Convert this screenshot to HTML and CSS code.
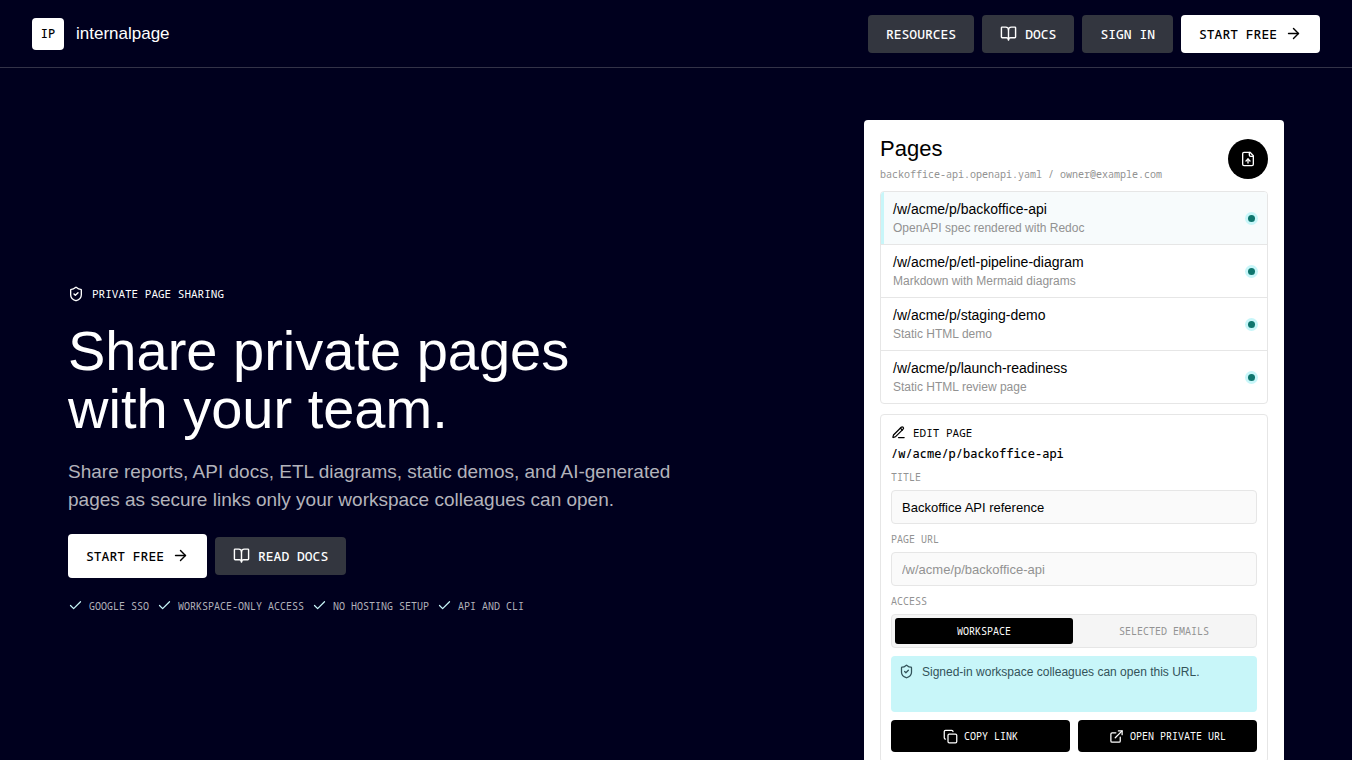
FILE: index.html
```html
<!DOCTYPE html>
<html lang="en">
<head>
    <meta charset="UTF-8">
    <meta name="viewport" content="width=device-width, initial-scale=1.0">
    <title>internalpage - Share private pages with your team</title>
    <link rel="stylesheet" href="styles.css">
</head>
<body>

    <!-- Shared icons -->
    <svg class="sprite" aria-hidden="true">
        <symbol id="icon-book" viewBox="0 0 24 24">
            <path d="M12 7v14"/>
            <path d="M3 18a1 1 0 0 1-1-1V4a1 1 0 0 1 1-1h5a4 4 0 0 1 4 4 4 4 0 0 1 4-4h5a1 1 0 0 1 1 1v13a1 1 0 0 1-1 1h-6a3 3 0 0 0-3 3 3 3 0 0 0-3-3z"/>
        </symbol>
        <symbol id="icon-arrow" viewBox="0 0 24 24">
            <path d="M5 12h14"/>
            <path d="m12 5 7 7-7 7"/>
        </symbol>
        <symbol id="icon-shield" viewBox="0 0 24 24">
            <path d="M20 13c0 5-3.5 7.5-7.66 8.95a1 1 0 0 1-.67-.01C7.5 20.5 4 18 4 13V6a1 1 0 0 1 1-1c2 0 4.5-1.2 6.24-2.72a1.17 1.17 0 0 1 1.52 0C14.51 3.81 17 5 19 5a1 1 0 0 1 1 1z"/>
            <path d="m9 12 2 2 4-4"/>
        </symbol>
        <symbol id="icon-check" viewBox="0 0 24 24">
            <path d="M20 6 9 17l-5-5"/>
        </symbol>
    </svg>

    <!-- Top bar -->
    <header class="site-header">
        <a href="/" class="brand">
            <span class="brand-mark">IP</span>
            <span class="brand-name">internalpage</span>
        </a>
        <nav class="site-nav">
            <a href="/resources" class="button">Resources</a>
            <a href="/docs" class="button"><svg class="icon"><use href="#icon-book"/></svg>Docs</a>
            <a href="/login" class="button">Sign in</a>
            <a href="/signup" class="button button-primary">Start free<svg class="icon"><use href="#icon-arrow"/></svg></a>
        </nav>
    </header>

    <main class="hero">
        <!-- Intro -->
        <section class="hero-copy">
            <p class="eyebrow"><svg class="icon"><use href="#icon-shield"/></svg>Private page sharing</p>
            <h1>Share private pages with your team.</h1>
            <p class="lead">Share reports, API docs, ETL diagrams, static demos, and AI-generated pages as secure links only your workspace colleagues can open.</p>
            <div class="hero-actions">
                <a href="/signup" class="button button-primary button-large">Start free<svg class="icon"><use href="#icon-arrow"/></svg></a>
                <a href="/docs" class="button"><svg class="icon"><use href="#icon-book"/></svg>Read docs</a>
            </div>
            <ul class="features">
                <li><svg class="icon"><use href="#icon-check"/></svg>Google SSO</li>
                <li><svg class="icon"><use href="#icon-check"/></svg>Workspace-only access</li>
                <li><svg class="icon"><use href="#icon-check"/></svg>No hosting setup</li>
                <li><svg class="icon"><use href="#icon-check"/></svg>API and CLI</li>
            </ul>
        </section>

        <!-- Product preview -->
        <section class="panel">
            <div class="panel-header">
                <div>
                    <h2>Pages</h2>
                    <p class="panel-meta">backoffice-api.openapi.yaml / owner@example.com</p>
                </div>
                <button type="button" class="upload" aria-label="Upload page">
                    <svg class="icon" viewBox="0 0 24 24">
                        <path d="M15 2H6a2 2 0 0 0-2 2v16a2 2 0 0 0 2 2h12a2 2 0 0 0 2-2V7z"/>
                        <path d="M14 2v4a2 2 0 0 0 2 2h4"/>
                        <path d="M12 12v6"/>
                        <path d="m15 15-3-3-3 3"/>
                    </svg>
                </button>
            </div>

            <ul class="page-list">
                <li class="page-row selected">
                    <div>
                        <a href="/w/acme/p/backoffice-api">/w/acme/p/backoffice-api</a>
                        <p>OpenAPI spec rendered with Redoc</p>
                    </div>
                    <span class="status"></span>
                </li>
                <li class="page-row">
                    <div>
                        <a href="/w/acme/p/etl-pipeline-diagram">/w/acme/p/etl-pipeline-diagram</a>
                        <p>Markdown with Mermaid diagrams</p>
                    </div>
                    <span class="status"></span>
                </li>
                <li class="page-row">
                    <div>
                        <a href="/w/acme/p/staging-demo">/w/acme/p/staging-demo</a>
                        <p>Static HTML demo</p>
                    </div>
                    <span class="status"></span>
                </li>
                <li class="page-row">
                    <div>
                        <a href="/w/acme/p/launch-readiness">/w/acme/p/launch-readiness</a>
                        <p>Static HTML review page</p>
                    </div>
                    <span class="status"></span>
                </li>
            </ul>

            <form class="editor">
                <div class="editor-heading">
                    <h3>
                        <svg class="icon" viewBox="0 0 24 24">
                            <path d="M12 20h9"/>
                            <path d="M16.38 3.62a1 1 0 0 1 3 3L7.37 18.64a2 2 0 0 1-.86.5l-2.87.84a.5.5 0 0 1-.62-.62l.84-2.87a2 2 0 0 1 .5-.86z"/>
                            <path d="m15 5 3 3"/>
                        </svg>
                        Edit page
                    </h3>
                    <p class="editor-path">/w/acme/p/backoffice-api</p>
                </div>

                <div class="field">
                    <label for="title">Title</label>
                    <input type="text" id="title" name="title" value="Backoffice API reference">
                </div>
                <div class="field">
                    <label for="url">Page URL</label>
                    <input type="text" id="url" name="url" value="/w/acme/p/backoffice-api" readonly>
                </div>
                <div class="field" role="group" aria-labelledby="access">
                    <span class="field-label" id="access">Access</span>
                    <div class="segmented">
                        <button type="button" class="active" aria-pressed="true">Workspace</button>
                        <button type="button" aria-pressed="false">Selected emails</button>
                    </div>
                </div>

                <p class="notice"><svg class="icon"><use href="#icon-shield"/></svg>Signed-in workspace colleagues can open this URL.</p>

                <div class="editor-actions">
                    <button type="button">
                        <svg class="icon" viewBox="0 0 24 24">
                            <rect x="8" y="8" width="14" height="14" rx="2"/>
                            <path d="M4 16c-1.1 0-2-.9-2-2V4c0-1.1.9-2 2-2h10c1.1 0 2 .9 2 2"/>
                        </svg>
                        Copy link
                    </button>
                    <button type="button">
                        <svg class="icon" viewBox="0 0 24 24">
                            <path d="M15 3h6v6"/>
                            <path d="M10 14 21 3"/>
                            <path d="M18 13v6a2 2 0 0 1-2 2H5a2 2 0 0 1-2-2V8a2 2 0 0 1 2-2h6"/>
                        </svg>
                        Open private URL
                    </button>
                </div>
            </form>
        </section>
    </main>

</body>
</html>
```
FILE: styles.css
```css
:root {
    --navy: #00001e;
    --slate: #33363f;
    --line: #e6e6e6;
    --muted: #929292;
    --aqua: #c8f6f9;
    --mono: "Noto Sans Mono", "DejaVu Sans Mono", monospace;
}

* {
    margin: 0;
    padding: 0;
    box-sizing: border-box;
}

body {
    background-color: var(--navy);
    color: #fff;
    font-family: "Liberation Sans", Arial, sans-serif;
}

a {
    color: inherit;
    text-decoration: none;
}

ul {
    list-style: none;
}

button,
input {
    font: inherit;
    color: inherit;
}

button {
    border: none;
    cursor: pointer;
}

.sprite {
    display: none;
}

.icon {
    width: 15px;
    height: 15px;
    flex: none;
    fill: none;
    stroke: currentColor;
    stroke-width: 2;
    stroke-linecap: round;
    stroke-linejoin: round;
}

/* Top bar */
.site-header {
    display: flex;
    align-items: center;
    justify-content: space-between;
    min-height: 68px;
    padding: 0 32px;
    border-bottom: 1px solid #333348;
}

.brand {
    display: flex;
    align-items: center;
    gap: 12px;
    font-size: 17px;
}

.brand-mark {
    display: grid;
    place-items: center;
    width: 32px;
    height: 32px;
    border-radius: 4px;
    background-color: #fff;
    color: #000;
    font-family: var(--mono);
    font-size: 12px;
    font-weight: 500;
}

.site-nav,
.hero-actions {
    display: flex;
    align-items: center;
    gap: 8px;
}

.button {
    display: inline-flex;
    align-items: center;
    gap: 8px;
    min-height: 38px;
    padding: 0 18px;
    border-radius: 4px;
    background-color: var(--slate);
    font-family: var(--mono);
    font-size: 13px;
    font-weight: 500;
    text-transform: uppercase;
}

.button .icon {
    width: 17px;
    height: 17px;
}

.button-primary {
    background-color: #fff;
    color: #000;
}

.button-large {
    min-height: 44px;
}

/* Hero */
.hero {
    display: grid;
    grid-template-columns: minmax(0, 1fr) 420px;
    align-items: center;
    gap: 48px;
    max-width: 1280px;
    margin: 0 auto;
    padding: 52px 32px;
}

.hero-copy {
    display: flex;
    flex-direction: column;
    gap: 20px;
}

.eyebrow {
    display: flex;
    align-items: center;
    gap: 8px;
    font-family: var(--mono);
    font-size: 11px;
    line-height: 16px;
    text-transform: uppercase;
}

.eyebrow .icon {
    width: 16px;
    height: 16px;
}

h1 {
    max-width: 580px;
    font-size: 56px;
    font-weight: 400;
    line-height: 58px;
}

.lead {
    max-width: 620px;
    color: #b3b3bb;
    font-size: 19px;
    line-height: 28px;
}

.features {
    display: flex;
    flex-wrap: wrap;
    gap: 8px;
    color: #b3b3bb;
    font-family: var(--mono);
    font-size: 10px;
    line-height: 16px;
    text-transform: uppercase;
}

.features li {
    display: flex;
    align-items: center;
    gap: 6px;
}

.features .icon {
    color: var(--aqua);
}

/* Pages panel */
.panel {
    display: flex;
    flex-direction: column;
    gap: 10px;
    padding: 16px;
    border-radius: 4px;
    background-color: #fff;
    color: #000;
}

.panel-header {
    display: flex;
    align-items: center;
    justify-content: space-between;
}

h2 {
    margin-bottom: 6px;
    font-size: 22px;
    font-weight: 400;
    line-height: 25px;
}

.panel-meta {
    color: var(--muted);
    font-family: var(--mono);
    font-size: 10px;
    line-height: 14px;
}

.upload {
    display: grid;
    place-items: center;
    width: 40px;
    height: 40px;
    border-radius: 50%;
    background-color: #000;
    color: #fff;
}

.upload .icon {
    width: 16px;
    height: 16px;
}

.page-list {
    overflow: hidden;
    border: 1px solid var(--line);
    border-radius: 4px;
}

.page-row {
    display: flex;
    align-items: center;
    justify-content: space-between;
    padding: 8px 12px;
    font-size: 14px;
    line-height: 18px;
}

.page-row + .page-row {
    border-top: 1px solid var(--line);
}

.page-row.selected {
    background-color: #f7fbfc;
    box-shadow: inset 3px 0 0 var(--aqua);
}

.page-row p {
    margin-top: 2px;
    color: var(--muted);
    font-size: 12px;
    line-height: 16px;
}

.status {
    width: 7px;
    height: 7px;
    border-radius: 50%;
    background-color: #0f766e;
    box-shadow: 0 0 0 3px var(--aqua);
}

/* Editor */
.editor {
    display: flex;
    flex-direction: column;
    gap: 8px;
    padding: 10px;
    border: 1px solid var(--line);
    border-radius: 4px;
}

.editor-heading {
    display: flex;
    flex-direction: column;
    gap: 6px;
    font-family: var(--mono);
}

h3 {
    display: flex;
    align-items: center;
    gap: 7px;
    font-size: 11px;
    font-weight: 400;
    line-height: 15px;
    text-transform: uppercase;
}

.editor-path {
    font-size: 12px;
    font-weight: 500;
    line-height: 16px;
}

.field {
    display: flex;
    flex-direction: column;
    gap: 5px;
}

.field label,
.field-label {
    color: var(--muted);
    font-family: var(--mono);
    font-size: 10px;
    line-height: 15px;
    text-transform: uppercase;
}

.field input {
    width: 100%;
    height: 34px;
    padding: 0 10px;
    border: 1px solid var(--line);
    border-radius: 4px;
    background-color: #fafafa;
    font-size: 13px;
}

.field input:read-only {
    color: var(--muted);
}

.segmented {
    display: grid;
    grid-template-columns: 1fr 1fr;
    gap: 2px;
    padding: 3px;
    border: 1px solid var(--line);
    border-radius: 4px;
    background-color: #f5f5f5;
}

.segmented button {
    min-height: 26px;
    border-radius: 3px;
    background-color: transparent;
    color: var(--muted);
    font-family: var(--mono);
    font-size: 10px;
    text-transform: uppercase;
}

.segmented .active {
    background-color: #000;
    color: #fff;
}

.notice {
    display: flex;
    align-items: flex-start;
    gap: 8px;
    min-height: 56px;
    padding: 8px;
    border-radius: 4px;
    background-color: var(--aqua);
    color: #33535a;
    font-size: 12px;
    line-height: 16px;
}

.editor-actions {
    display: grid;
    grid-template-columns: 1fr 1fr;
    gap: 8px;
}

.editor-actions button {
    display: flex;
    align-items: center;
    justify-content: center;
    gap: 6px;
    min-height: 32px;
    border-radius: 4px;
    background-color: #000;
    color: #fff;
    font-family: var(--mono);
    font-size: 10px;
    text-transform: uppercase;
}
```
